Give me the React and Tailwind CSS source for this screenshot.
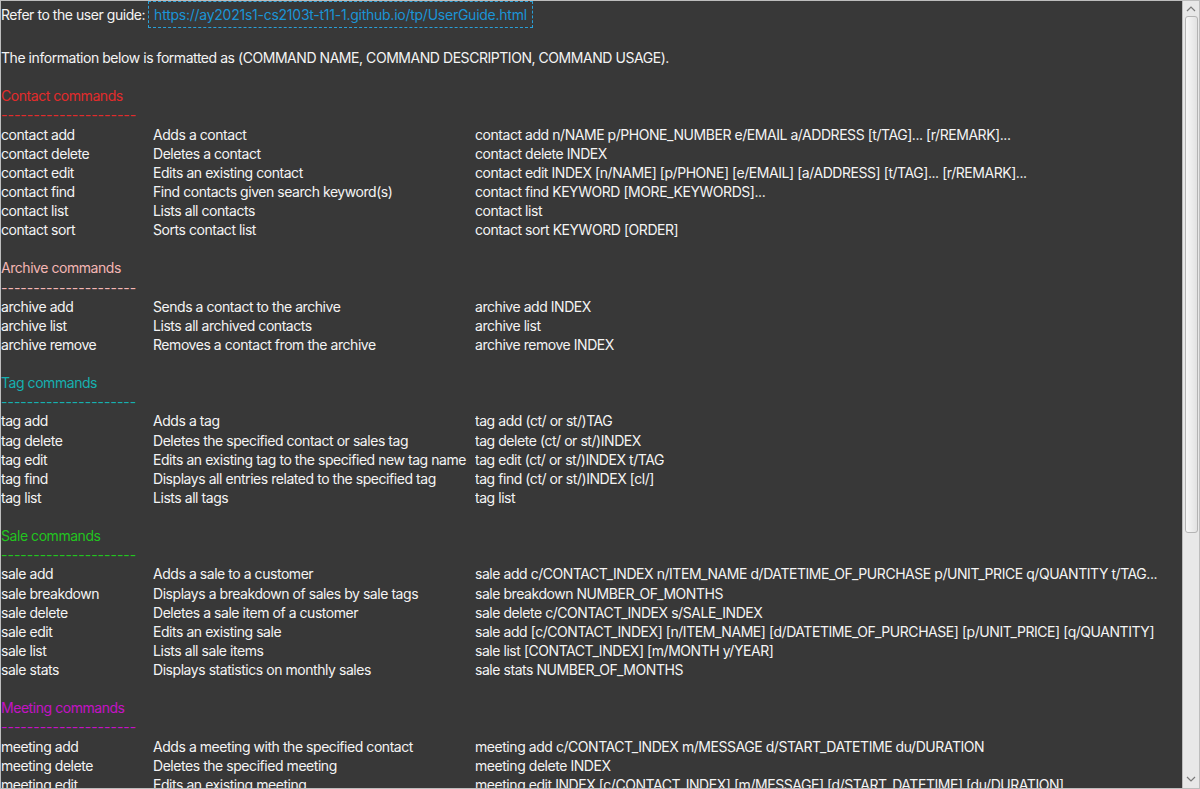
import React from "react";

const sections = [
  {
    title: "Contact commands",
    color: "text-[#e32b2b]",
    rows: [
      ["contact add", "Adds a contact", "contact add n/NAME p/PHONE_NUMBER e/EMAIL a/ADDRESS [t/TAG]... [r/REMARK]..."],
      ["contact delete", "Deletes a contact", "contact delete INDEX"],
      ["contact edit", "Edits an existing contact", "contact edit INDEX [n/NAME] [p/PHONE] [e/EMAIL] [a/ADDRESS] [t/TAG]... [r/REMARK]..."],
      ["contact find", "Find contacts given search keyword(s)", "contact find KEYWORD [MORE_KEYWORDS]..."],
      ["contact list", "Lists all contacts", "contact list"],
      ["contact sort", "Sorts contact list", "contact sort KEYWORD [ORDER]"],
    ],
  },
  {
    title: "Archive commands",
    color: "text-[#f4b6b4]",
    rows: [
      ["archive add", "Sends a contact to the archive", "archive add INDEX"],
      ["archive list", "Lists all archived contacts", "archive list"],
      ["archive remove", "Removes a contact from the archive", "archive remove INDEX"],
    ],
  },
  {
    title: "Tag commands",
    color: "text-[#16b0b0]",
    rows: [
      ["tag add", "Adds a tag", "tag add (ct/ or st/)TAG"],
      ["tag delete", "Deletes the specified contact or sales tag", "tag delete (ct/ or st/)INDEX"],
      ["tag edit", "Edits an existing tag to the specified new tag name", "tag edit (ct/ or st/)INDEX t/TAG"],
      ["tag find", "Displays all entries related to the specified tag", "tag find (ct/ or st/)INDEX [cl/]"],
      ["tag list", "Lists all tags", "tag list"],
    ],
  },
  {
    title: "Sale commands",
    color: "text-[#22c41f]",
    rows: [
      ["sale add", "Adds a sale to a customer", "sale add c/CONTACT_INDEX n/ITEM_NAME d/DATETIME_OF_PURCHASE p/UNIT_PRICE q/QUANTITY t/TAG..."],
      ["sale breakdown", "Displays a breakdown of sales by sale tags", "sale breakdown NUMBER_OF_MONTHS"],
      ["sale delete", "Deletes a sale item of a customer", "sale delete c/CONTACT_INDEX s/SALE_INDEX"],
      ["sale edit", "Edits an existing sale", "sale add [c/CONTACT_INDEX] [n/ITEM_NAME] [d/DATETIME_OF_PURCHASE] [p/UNIT_PRICE] [q/QUANTITY]"],
      ["sale list", "Lists all sale items", "sale list [CONTACT_INDEX] [m/MONTH y/YEAR]"],
      ["sale stats", "Displays statistics on monthly sales", "sale stats NUMBER_OF_MONTHS"],
    ],
  },
  {
    title: "Meeting commands",
    color: "text-[#c512c5]",
    rows: [
      ["meeting add", "Adds a meeting with the specified contact", "meeting add c/CONTACT_INDEX m/MESSAGE d/START_DATETIME du/DURATION"],
      ["meeting delete", "Deletes the specified meeting", "meeting delete INDEX"],
      ["meeting edit", "Edits an existing meeting", "meeting edit INDEX [c/CONTACT_INDEX] [m/MESSAGE] [d/START_DATETIME] [du/DURATION]"],
    ],
  },
];

function Section({ title, color, rows }) {
  return (
    <div className="mb-[19.125px]">
      <div className={`h-[19.125px] ${color}`}>{title}</div>
      <div className={`h-[19.125px] tracking-normal ${color}`}>---------------------</div>
      {rows.map((r) => (
        <div key={r[0]} className="grid grid-cols-[152px_322px_minmax(0,1fr)] h-[19.125px]">
          <span className="whitespace-nowrap">{r[0]}</span>
          <span className="whitespace-nowrap">{r[1]}</span>
          <span className="whitespace-nowrap overflow-hidden">{r[2]}</span>
        </div>
      ))}
    </div>
  );
}

// Vertical scrollbar on the right edge
function ScrollBar() {
  return (
    <div className="w-[17px] h-full bg-[#e8e8e8] border-l border-[#bcbcbc] flex flex-col items-center">
      <svg width="12" height="14" viewBox="0 0 12 14" className="mt-[1px]">
        <path d="M2 9 L6 5 L10 9" fill="none" stroke="#7a7a7a" strokeWidth="1.2" />
      </svg>
      <div className="w-[13px] h-[517px] rounded-[3px] border border-[#b4b4b4] bg-gradient-to-r from-[#f8f8f8] to-[#e2e2e2]" />
      <div className="flex-1" />
      <svg width="12" height="14" viewBox="0 0 12 14" className="mb-[2px]">
        <path d="M2 5 L6 9 L10 5" fill="none" stroke="#7a7a7a" strokeWidth="1.2" />
      </svg>
    </div>
  );
}

export default function App() {
  return (
    <div className="w-[1200px] h-[789px] bg-[#383838] border border-[#bdbdbd] flex overflow-hidden text-[14px] leading-[19px] tracking-[-0.45px] text-[#f4f4f4] font-['Inter',sans-serif]">
      <div className="flex-1 min-w-0 overflow-hidden pr-[14px]">
        <div className="flex items-center h-[27px]">
          <span>Refer to the user guide:</span>
          <span className="ml-[3px] px-[5px] h-[27px] flex items-center border border-dashed border-[#2a9fd6] text-[#1b94d6] tracking-[-0.25px]">
            https://ay2021s1-cs2103t-t11-1.github.io/tp/UserGuide.html
          </span>
        </div>
        <div className="mt-[20px]">
          <div className="h-[19.125px] mb-[19.125px]">
            The information below is formatted as (COMMAND NAME, COMMAND DESCRIPTION, COMMAND USAGE).
          </div>
          {sections.map((s) => (
            <Section key={s.title} {...s} />
          ))}
        </div>
      </div>
      <ScrollBar />
    </div>
  );
}
